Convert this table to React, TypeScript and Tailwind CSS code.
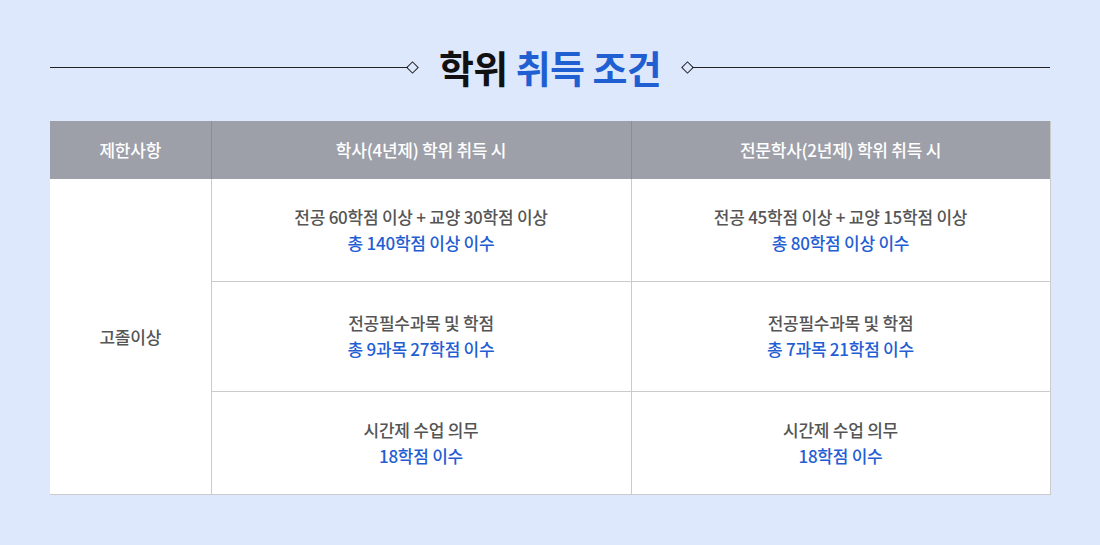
const font = { fontFamily: '"Noto Sans CJK KR", "Noto Sans", sans-serif' };

const rows = [
  {
    a: ["전공 60학점 이상 + 교양 30학점 이상", "총 140학점 이상 이수"],
    b: ["전공 45학점 이상 + 교양 15학점 이상", "총 80학점 이상 이수"],
    h: "h-[102px]",
  },
  {
    a: ["전공필수과목 및 학점", "총 9과목 27학점 이수"],
    b: ["전공필수과목 및 학점", "총 7과목 21학점 이수"],
    h: "h-[110px]",
  },
  {
    a: ["시간제 수업 의무", "18학점 이수"],
    b: ["시간제 수업 의무", "18학점 이수"],
    h: "h-[103px]",
  },
];

function Diamond() {
  return <div className="w-[9px] h-[9px] rotate-45 border border-[#222] bg-transparent shrink-0" />;
}

function Cell({ lines }: { lines: string[] }) {
  return (
    <td className="border-r border-b border-[#cbcbcb] text-center align-middle">
      <p className="text-[17px] leading-[26px] tracking-[-0.25px] text-[#555] font-medium">{lines[0]}</p>
      <p className="text-[17px] leading-[26px] tracking-[-0.25px] text-[#1f5ed3] font-medium">{lines[1]}</p>
    </td>
  );
}

export default function App() {
  return (
    <div className="w-[1100px] h-[545px] bg-[#dee8fd] px-[50px] pt-[37px]" style={font}>
      <div className="flex items-center h-[60px]">
        <div className="flex-1 h-px bg-[#222]" />
        <Diamond />
        <h1 className="px-[22px] text-[38px] leading-none font-bold tracking-[-0.6px] text-[#111]">
          학위 <span className="text-[#1f5fd2]">취득 조건</span>
        </h1>
        <Diamond />
        <div className="flex-1 h-px bg-[#222]" />
      </div>
      <table className="mt-[24px] w-[1000px] border-collapse table-fixed bg-white">
        <colgroup>
          <col className="w-[161px]" />
          <col className="w-[420px]" />
          <col className="w-[419px]" />
        </colgroup>
        <thead>
          <tr className="h-[58px] bg-[#9ea0a9] text-white text-[17px] tracking-[-0.25px]">
            <th className="font-medium border-r border-[#8b8d95]">제한사항</th>
            <th className="font-medium border-r border-[#8b8d95]">학사(4년제) 학위 취득 시</th>
            <th className="font-medium border-r border-[#cbcbcb]">전문학사(2년제) 학위 취득 시</th>
          </tr>
        </thead>
        <tbody>
          {rows.map((r, i) => (
            <tr key={i} className={r.h}>
              {i === 0 && (
                <td
                  rowSpan={3}
                  className="border-r border-b border-[#cbcbcb] text-center align-middle text-[17px] tracking-[-0.25px] text-[#555] font-medium"
                >
                  고졸이상
                </td>
              )}
              <Cell lines={r.a} />
              <Cell lines={r.b} />
            </tr>
          ))}
        </tbody>
      </table>
    </div>
  );
}
